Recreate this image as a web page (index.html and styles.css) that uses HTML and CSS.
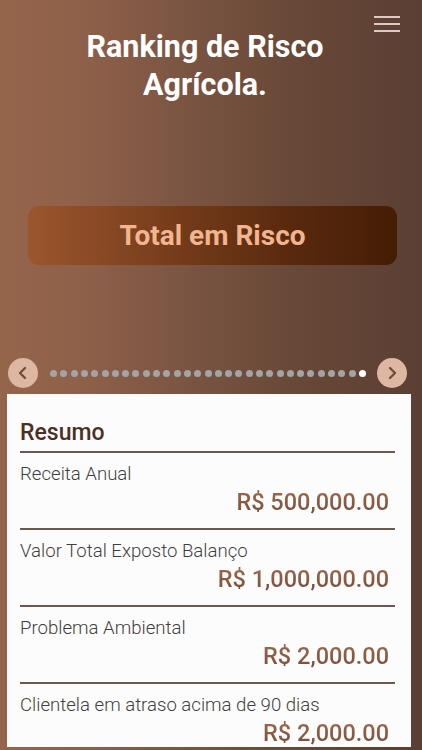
FILE: index.html
```html
<!DOCTYPE html>
<html lang="pt-BR">
<head>
    <meta charset="UTF-8">
    <meta name="viewport" content="width=device-width, initial-scale=1.0">
    <title>Ranking de Risco Agrícola</title>
    <link rel="stylesheet" href="styles.css">
</head>
<body>
    <div class="page">
        <!-- Cabeçalho -->
        <header class="header">
            <h1 class="title">Ranking de Risco<br>Agrícola.</h1>
            <button class="menu" aria-label="Menu">
                <span></span><span></span><span></span>
            </button>
        </header>

        <div class="total-wrap">
            <button class="total-btn">Total em Risco</button>
        </div>

        <!-- Navegação do carrossel -->
        <div class="carousel-nav">
            <button class="nav-btn" aria-label="Anterior">
                <svg width="14" height="14" viewBox="0 0 14 14"><path d="M9 2 L4 7 L9 12" fill="none" stroke="#7a4a37" stroke-width="2.4" stroke-linecap="round" stroke-linejoin="round"/></svg>
            </button>
            <div class="dots" id="dots"></div>
            <button class="nav-btn" aria-label="Próximo">
                <svg width="14" height="14" viewBox="0 0 14 14"><path d="M5 2 L10 7 L5 12" fill="none" stroke="#7a4a37" stroke-width="2.4" stroke-linecap="round" stroke-linejoin="round"/></svg>
            </button>
        </div>

        <!-- Resumo -->
        <div class="card">
            <h2 class="card-title">Resumo</h2>
            <div class="item">
                <p class="label">Receita Anual</p>
                <p class="value">R$ 500,000.00</p>
            </div>
            <div class="item">
                <p class="label">Valor Total Exposto Balanço</p>
                <p class="value">R$ 1,000,000.00</p>
            </div>
            <div class="item">
                <p class="label">Problema Ambiental</p>
                <p class="value">R$ 2,000.00</p>
            </div>
            <div class="item">
                <p class="label">Clientela em atraso acima de 90 dias</p>
                <p class="value">R$ 2,000.00</p>
            </div>
        </div>
    </div>

    <script>
        const dots = document.getElementById('dots');
        for (let i = 0; i < 31; i++) {
            const dot = document.createElement('span');
            dot.className = i === 30 ? 'dot active' : 'dot';
            dots.appendChild(dot);
        }
    </script>
</body>
</html>
```

FILE: styles.css
```css
body {
    margin: 0;
    font-family: Roboto, "Liberation Sans", sans-serif;
    background: linear-gradient(90deg, #95654b 0%, #8f614a 18%, #7a5442 45%, #684837 70%, #5b3f34 100%);
    height: 750px;
    overflow: hidden;
}

.page {
    height: 750px;
}

.header {
    position: relative;
    padding-top: 28px;
}

.title {
    margin: 0;
    text-align: center;
    color: #fff;
    font-size: 30.5px;
    font-weight: 700;
    line-height: 38px;
    padding-right: 12px;
}

.menu {
    position: absolute;
    top: 16px;
    right: 22px;
    width: 26px;
    height: 16px;
    padding: 0;
    border: none;
    background: none;
    display: flex;
    flex-direction: column;
    justify-content: space-between;
}

.menu span {
    display: block;
    height: 2px;
    width: 100%;
    background-color: #dccbc2;
}

.total-wrap {
    padding: 102px 25px 0 28px;
}

.total-btn {
    width: 100%;
    height: 59px;
    border: none;
    border-radius: 11px;
    background: linear-gradient(90deg, #9b562d 0%, #7a3f1d 35%, #5a2a0e 70%, #441d05 100%);
    color: #f2b58f;
    font-family: Roboto, "Liberation Sans", sans-serif;
    font-size: 28px;
    font-weight: 700;
}

.carousel-nav {
    display: flex;
    align-items: center;
    padding: 93px 15px 0 8px;
    height: 30px;
}

.nav-btn {
    width: 30px;
    height: 30px;
    border-radius: 50%;
    border: none;
    padding: 0;
    background-color: #ddb7a2;
    display: flex;
    align-items: center;
    justify-content: center;
    flex-shrink: 0;
}

.dots {
    flex: 1;
    display: flex;
    justify-content: center;
    gap: 3.3px;
    padding: 0 6px 0 7px;
}

.dot {
    width: 7px;
    height: 7px;
    border-radius: 50%;
    background-color: #a3a4a5;
}

.dot.active {
    background-color: #ffffff;
}

.card {
    margin: 6px 11px 0 7px;
    background-color: #fdfcfc;
    padding: 24px 16px 0 13px;
    height: 353px;
    box-sizing: border-box;
    overflow: hidden;
}

.card-title {
    margin: 0;
    font-size: 23px;
    font-weight: 500;
    color: #4b2f24;
    line-height: 30px;
    padding-bottom: 3px;
    border-bottom: 2px solid #6d5850;
}

.item {
    border-bottom: 2px solid #6d5850;
    padding-top: 9px;
    height: 66px;
}

.label {
    margin: 0;
    font-size: 18.6px;
    font-weight: 300;
    color: #3e3e3e;
    line-height: 24px;
}

.value {
    margin: 0;
    text-align: right;
    padding-right: 6px;
    font-size: 23.5px;
    font-weight: 500;
    line-height: 32px;
    background: linear-gradient(180deg, #a46d4d 0%, #6f4a3a 100%);
    -webkit-background-clip: text;
    background-clip: text;
    color: transparent;
}
```
